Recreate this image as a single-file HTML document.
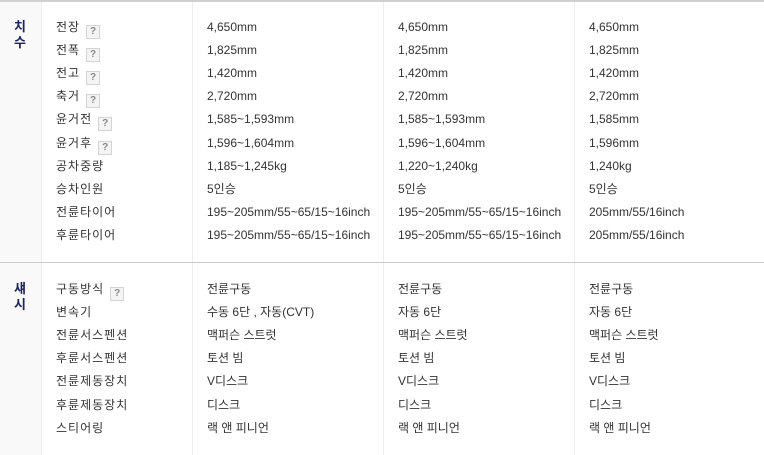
<!DOCTYPE html>
<html><head><meta charset="utf-8"><style>
body{margin:0;width:764px;height:455px;overflow:hidden;background:#fff;font-family:"Liberation Sans","Noto Sans CJK KR","NanumGothic",sans-serif;font-size:12px;color:#333;position:relative}
.a{position:absolute;white-space:nowrap;line-height:14px}
.k{letter-spacing:1px}
.v{position:absolute;width:1px;background:#eee}
.h{position:absolute;left:0;width:764px;background:#ccc}
.q{display:inline-block;width:12px;height:12px;border:1px solid #d4d4d4;background:#f4f4f4;color:#888;font-size:10px;line-height:12px;text-align:center;font-weight:bold;vertical-align:-3px;margin-left:6px;letter-spacing:0}
.s{position:absolute;left:14px;font-weight:bold;color:#1a2363;line-height:16px;width:12px;font-size:13px}
</style></head><body>
<div style="position:absolute;left:0;top:0;width:41px;height:455px;background:#f9f9f9"></div>
<div class="h" style="top:0;height:2px;background:#d0d0d0"></div>
<div class="v" style="left:41px;top:2px;height:453px"></div>
<div class="v" style="left:192px;top:2px;height:453px"></div>
<div class="v" style="left:383px;top:2px;height:453px"></div>
<div class="v" style="left:574px;top:2px;height:453px"></div>
<div class="h" style="top:262px;height:1px"></div>
<div class="s" style="top:19px">치<br>수</div>
<div class="s" style="top:281px">섀<br>시</div>
<div id="c"></div>
<script>
var r1=[["전장",1,"4,650mm","4,650mm","4,650mm"],["전폭",1,"1,825mm","1,825mm","1,825mm"],["전고",1,"1,420mm","1,420mm","1,420mm"],["축거",1,"2,720mm","2,720mm","2,720mm"],["윤거전",1,"1,585~1,593mm","1,585~1,593mm","1,585mm"],["윤거후",1,"1,596~1,604mm","1,596~1,604mm","1,596mm"],["공차중량",0,"1,185~1,245kg","1,220~1,240kg","1,240kg"],["승차인원",0,"5인승","5인승","5인승"],["전륜타이어",0,"195~205mm/55~65/15~16inch","195~205mm/55~65/15~16inch","205mm/55/16inch"],["후륜타이어",0,"195~205mm/55~65/15~16inch","195~205mm/55~65/15~16inch","205mm/55/16inch"]];
var r2=[["구동방식",1,"전륜구동","전륜구동","전륜구동"],["변속기",0,"수동 6단 , 자동(CVT)","자동 6단","자동 6단"],["전륜서스펜션",0,"맥퍼슨 스트럿","맥퍼슨 스트럿","맥퍼슨 스트럿"],["후륜서스펜션",0,"토션 빔","토션 빔","토션 빔"],["전륜제동장치",0,"V디스크","V디스크","V디스크"],["후륜제동장치",0,"디스크","디스크","디스크"],["스티어링",0,"랙 앤 피니언","랙 앤 피니언","랙 앤 피니언"]];
var h="";
function add(rows,y0){rows.forEach(function(r,i){var y=y0+i*23.1;
h+='<div class="a k" style="left:56px;top:'+y+'px">'+r[0]+(r[1]?'<span class="q">?</span>':'')+'</div>';
h+='<div class="a" style="left:207px;top:'+y+'px">'+r[2]+'</div>';
h+='<div class="a" style="left:398px;top:'+y+'px">'+r[3]+'</div>';
h+='<div class="a" style="left:589px;top:'+y+'px">'+r[4]+'</div>';});}
add(r1,20);add(r2,282);
document.getElementById("c").innerHTML=h;
</script>
</body></html>
